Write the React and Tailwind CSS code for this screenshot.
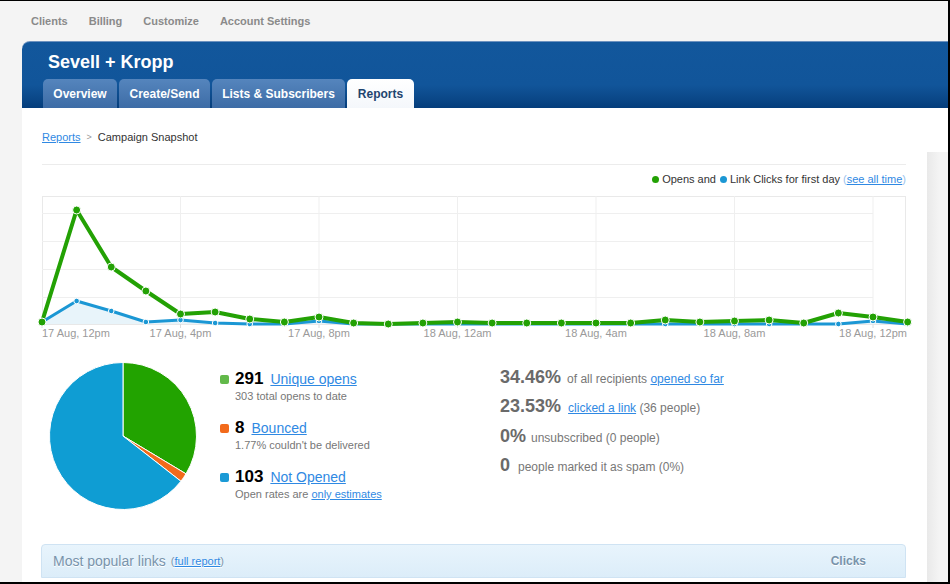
import React from 'react';

const STEP = 831 / 24;
const opens = [126, 14, 71, 95, 118, 116, 123, 126, 121, 127, 128, 127, 126, 127, 127, 127, 127, 127, 124, 126, 125, 124, 127, 117, 121, 126];
const clicks = [126, 105, 115, 126, 124, 127, 128, 128, 125, 128, 128, 128, 128, 128, 128, 128, 128, 128, 128, 128, 128, 128, 128, 128, 125, 128];

const pts = (arr) => arr.map((y, i) => `${(i * STEP).toFixed(1)},${y}`).join(' ');

const labels = [
  { x: 0, t: '17 Aug, 12pm', a: 'start' },
  { x: 138.5, t: '17 Aug, 4pm', a: 'middle' },
  { x: 277, t: '17 Aug, 8pm', a: 'middle' },
  { x: 415.5, t: '18 Aug, 12am', a: 'middle' },
  { x: 554, t: '18 Aug, 4am', a: 'middle' },
  { x: 692.5, t: '18 Aug, 8am', a: 'middle' },
  { x: 831, t: '18 Aug, 12pm', a: 'middle' },
];

const Chart = () => (
  <svg width="864" height="146" className="block overflow-visible">
    {/* grid */}
    <rect x="0.5" y="0.5" width="863" height="127.5" fill="none" stroke="#e9e9e9" />
    {[17, 45, 73, 101].map((y) => (
      <line key={y} x1="0" y1={y + 0.5} x2="831" y2={y + 0.5} stroke="#efefef" />
    ))}
    {[138.5, 277, 415.5, 554, 692.5, 831].map((x) => (
      <line key={x} x1={x} y1="0" x2={x} y2="128" stroke="#efefef" />
    ))}
    <line x1="0" y1="128" x2="864" y2="128" stroke="#dcdcdc" />
    {[0, 138.5, 277, 415.5, 554, 692.5, 831].map((x) => (
      <line key={'t' + x} x1={x} y1="128" x2={x} y2="132" stroke="#dcdcdc" />
    ))}

    {/* clicks area + line */}
    <polygon points={`0,128 ${pts(clicks)} ${(25 * STEP).toFixed(1)},128`} fill="#e8f4fa" />
    <polyline points={pts(clicks)} fill="none" stroke="#1b97d4" strokeWidth="3" strokeLinejoin="round" />
    {clicks.map((y, i) => (
      <circle key={'c' + i} cx={i * STEP} cy={y} r="2.8" fill="#1b97d4" stroke="#fff" strokeWidth="1" />
    ))}

    {/* opens line */}
    <polyline points={pts(opens)} fill="none" stroke="#23a104" strokeWidth="4" strokeLinejoin="round" />
    {opens.map((y, i) => (
      <circle key={'o' + i} cx={i * STEP} cy={y} r="4" fill="#23a104" stroke="#fff" strokeWidth="1" />
    ))}

    {labels.map((l) => (
      <text key={l.t} x={l.x} y="141" textAnchor={l.a} fontSize="11" fill="#9a9a9a" fontFamily="'Liberation Sans', Arial, sans-serif">
        {l.t}
      </text>
    ))}
  </svg>
);

const Pie = () => (
  <svg width="150" height="150" className="block">
    <path d="M75 75 L75 1.5 A73.5 73.5 0 0 1 138 112.85 Z" fill="#22a300" stroke="#fff" strokeWidth="1" />
    <path d="M75 75 L138 112.85 A73.5 73.5 0 0 1 132.92 120.25 Z" fill="#f26a1b" stroke="#fff" strokeWidth="1" />
    <path d="M75 75 L132.92 120.25 A73.5 73.5 0 1 1 75 1.5 Z" fill="#0f9dd3" stroke="#fff" strokeWidth="1" />
  </svg>
);

const tabs = [
  { name: 'Overview', w: 'w-[74px]' },
  { name: 'Create/Send', w: 'w-[91px]' },
  { name: 'Lists & Subscribers', w: 'w-[133px]' },
];

const Link = ({ children, className = '' }) => (
  <a href="#" className={`text-[#2f89e3] underline ${className}`}>{children}</a>
);

const LegendItem = ({ color, num, label, children }) => (
  <div className="mb-[15px]">
    <div className="flex items-center h-[20px]">
      <span className={`w-[9px] h-[9px] rounded-[2px] ${color} mr-[6px]`} />
      <span className="text-[17px] font-bold text-black mr-[7px]">{num}</span>
      <Link className="text-[14px]">{label}</Link>
    </div>
    <div className="text-[11px] leading-[14px] text-[#777] pl-[15px]">{children}</div>
  </div>
);

const Stat = ({ big, children, gap = 'mr-[6px]' }) => (
  <div className="h-[29.3px] flex items-baseline text-[#777] text-[12px]">
    <span className={`text-[18px] font-bold text-[#6a6a6a] ${gap}`}>{big}</span>
    {children}
  </div>
);

export default function App() {
  return (
    <div className="w-[950px] h-[584px] overflow-hidden bg-[#f4f4f4] border-t border-r-2 border-b-2 border-black font-['Liberation_Sans',Arial,sans-serif]">
      {/* top nav */}
      <div className="h-[40px] flex items-center pl-[31px] gap-[21px] text-[11px] font-bold text-[#8a8a8a]">
        <span>Clients</span>
        <span>Billing</span>
        <span>Customize</span>
        <span>Account Settings</span>
      </div>

      <div className="ml-[22px]">
        {/* blue header */}
        <div className="h-[67px] rounded-tl-[8px] border-t border-[#6d92bf] bg-[linear-gradient(to_bottom,#12579c_0%,#11559a_65%,#0a4686_88%,#043d7b_100%)]">
          <div className="pt-[9px] pl-[26px] h-[31px] text-[18px] leading-[22px] font-bold text-white">Sevell + Kropp</div>
          <div className="mt-[6px] pl-[21px] flex gap-[2px]">
            {tabs.map((t) => (
              <div
                key={t.name}
                className={`${t.w} h-[29px] rounded-t-[5px] bg-[linear-gradient(to_bottom,#5585bd,#3d6ca6)] text-white text-[12px] font-bold flex items-center justify-center`}
              >
                {t.name}
              </div>
            ))}
            <div className="w-[67px] h-[29px] rounded-t-[5px] bg-[linear-gradient(to_bottom,#ffffff,#f4f7fb)] text-[#1f446f] text-[12px] font-bold flex items-center justify-center">
              Reports
            </div>
          </div>
        </div>

        {/* breadcrumb */}
        <div className="h-[44px] bg-white pl-[20px] pt-[21px] text-[11px] leading-[16px] flex items-start">
          <Link>Reports</Link>
          <span className="mx-[6px] text-[#999] text-[9px]">&gt;</span>
          <span className="text-[#333]">Campaign Snapshot</span>
        </div>

        <div className="flex">
          <div className="w-[905px] h-[440px] bg-white pl-[20px] pr-[21px]">
            <div className="mt-[12px] h-px bg-[#ececec]" />
            <div className="mt-[7px] h-[14px] flex items-center justify-end text-[11px] text-[#333]">
              <span className="w-[7px] h-[7px] rounded-full bg-[#23a104] mr-[3px]" />
              <span>Opens and</span>
              <span className="w-[7px] h-[7px] rounded-full bg-[#1b97d4] ml-[4px] mr-[3px]" />
              <span>Link Clicks for first day</span>
              <span className="ml-[3px] text-[#9ac3ee]">(</span>
              <Link>see all time</Link>
              <span className="text-[#9ac3ee]">)</span>
            </div>

            <div className="mt-[10px]">
              <Chart />
            </div>

            <div className="mt-[19px] flex">
              <div className="ml-[6px] w-[172px]">
                <Pie />
              </div>
              <div className="mt-[8px] w-[280px]">
                <LegendItem color="bg-[#62b94a]" num="291" label="Unique opens">303 total opens to date</LegendItem>
                <LegendItem color="bg-[#f26a1b]" num="8" label="Bounced">1.77% couldn't be delivered</LegendItem>
                <LegendItem color="bg-[#1b9ad6]" num="103" label="Not Opened">
                  Open rates are <Link>only estimates</Link>
                </LegendItem>
              </div>
              <div className="mt-[3px]">
                <Stat big="34.46%">
                  <span>of all recipients&nbsp;</span>
                  <Link>opened so far</Link>
                </Stat>
                <Stat big="23.53%" gap="mr-[7px]">
                  <Link>clicked a link</Link>
                  <span>&nbsp;(36 people)</span>
                </Stat>
                <Stat big="0%" gap="mr-[5px]">
                  <span>unsubscribed (0 people)</span>
                </Stat>
                <Stat big="0" gap="mr-[8px]">
                  <span>people marked it as spam (0%)</span>
                </Stat>
              </div>
            </div>

            <div className="mt-[28px] -ml-px h-[34px] rounded-t-[4px] border border-[#cfe3f3] bg-[linear-gradient(to_bottom,#e8f4fc,#dcedf9)] flex items-center pl-[11px] pr-[39px] [text-shadow:0_1px_0_#fff]">
              <span className="text-[14px] text-[#7893ab]">Most popular links</span>
              <span className="ml-[5px] text-[11px] text-[#7893ab]">
                (<Link>full report</Link>)
              </span>
              <span className="ml-auto text-[12px] font-bold text-[#7893ab]">Clicks</span>
            </div>
          </div>
          <div className="flex-1 bg-[linear-gradient(to_right,#e9e9e9,#f4f4f4_60%)]" />
        </div>
      </div>
    </div>
  );
}
